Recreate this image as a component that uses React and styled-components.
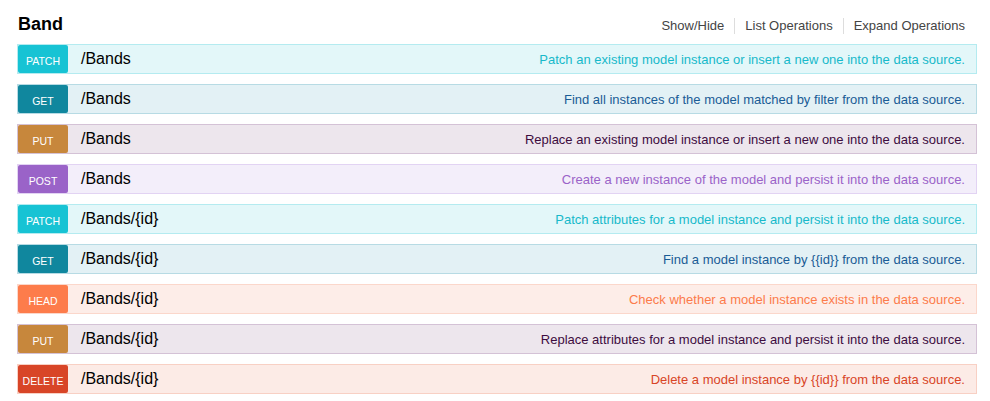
import React from 'react';
import styled, { createGlobalStyle } from 'styled-components';

const GlobalStyle = createGlobalStyle`
  body {
    margin: 0;
    background: #fff;
    font-family: "Liberation Sans", Arial, sans-serif;
  }
`;

const methods = {
  patch: { badge: '#17c3d4', bg: '#e3f7f9', border: '#b4ebf0', text: '#17b9ca' },
  get: { badge: '#10879e', bg: '#e3f1f5', border: '#b7dbe4', text: '#1a5c96' },
  put: { badge: '#c7873c', bg: '#ede6ed', border: '#d4c2d6', text: '#3d0c3f' },
  post: { badge: '#9a63c8', bg: '#f3eefa', border: '#e2d3f3', text: '#9a63c8' },
  head: { badge: '#fd7c4b', bg: '#fdede8', border: '#fbd7cb', text: '#fc7b4b' },
  delete: { badge: '#d84527', bg: '#fcebe6', border: '#f8d0c4', text: '#d84527' },
};

const operations = [
  { method: 'patch', path: '/Bands', summary: 'Patch an existing model instance or insert a new one into the data source.' },
  { method: 'get', path: '/Bands', summary: 'Find all instances of the model matched by filter from the data source.' },
  { method: 'put', path: '/Bands', summary: 'Replace an existing model instance or insert a new one into the data source.' },
  { method: 'post', path: '/Bands', summary: 'Create a new instance of the model and persist it into the data source.' },
  { method: 'patch', path: '/Bands/{id}', summary: 'Patch attributes for a model instance and persist it into the data source.' },
  { method: 'get', path: '/Bands/{id}', summary: 'Find a model instance by {{id}} from the data source.' },
  { method: 'head', path: '/Bands/{id}', summary: 'Check whether a model instance exists in the data source.' },
  { method: 'put', path: '/Bands/{id}', summary: 'Replace attributes for a model instance and persist it into the data source.' },
  { method: 'delete', path: '/Bands/{id}', summary: 'Delete a model instance by {{id}} from the data source.' },
];

const Resource = () => (
  <Wrapper>
    <Heading>
      <h2>Band</h2>
      <Options>
        <li>Show/Hide</li>
        <li>List Operations</li>
        <li>Expand Operations</li>
      </Options>
    </Heading>
    <OperationList>
      {operations.map((op, index) => (
        <Operation key={index} $method={op.method}>
          <Method $method={op.method}>{op.method}</Method>
          <Path>{op.path}</Path>
          <Summary $method={op.method}>{op.summary}</Summary>
        </Operation>
      ))}
    </OperationList>
  </Wrapper>
);

const Wrapper = styled.section`
  width: 960px;
  margin-left: 17px;
  padding-top: 12px;
`;

const Heading = styled.div`
  display: flex;
  align-items: baseline;
  justify-content: space-between;
  height: 32px;
  h2 {
    margin: 0 0 0 1px;
    font-size: 18px;
    font-weight: bold;
    color: #000;
    line-height: 24px;
  }
`;

const Options = styled.ul`
  display: flex;
  list-style: none;
  margin: 0 12px 0 0;
  padding: 0;
  li {
    font-size: 13px;
    color: #444;
    line-height: 16px;
    padding: 0 10px;
    border-right: 1px solid #ddd;
  }
  li:last-child {
    border-right: none;
    padding-right: 0;
  }
`;

const OperationList = styled.div`
  display: flex;
  flex-direction: column;
  gap: 10px;
`;

const Operation = styled.div`
  display: flex;
  align-items: center;
  height: 30px;
  box-sizing: border-box;
  background: ${p => methods[p.$method].bg};
  border: 1px solid ${p => methods[p.$method].border};
`;

const Method = styled.span`
  width: 50px;
  height: 28px;
  box-sizing: border-box;
  padding-top: 3px;
  display: flex;
  align-items: center;
  justify-content: center;
  border-radius: 2px;
  background: ${p => methods[p.$method].badge};
  color: #fff;
  font-size: 10.5px;
  text-transform: uppercase;
`;

const Path = styled.span`
  margin-left: 13px;
  font-size: 16px;
  color: #000;
`;

const Summary = styled.span`
  margin-left: auto;
  padding-right: 11px;
  font-size: 13px;
  color: ${p => methods[p.$method].text};
`;

const App = () => (
  <>
    <GlobalStyle />
    <Resource />
  </>
);

export default App;
